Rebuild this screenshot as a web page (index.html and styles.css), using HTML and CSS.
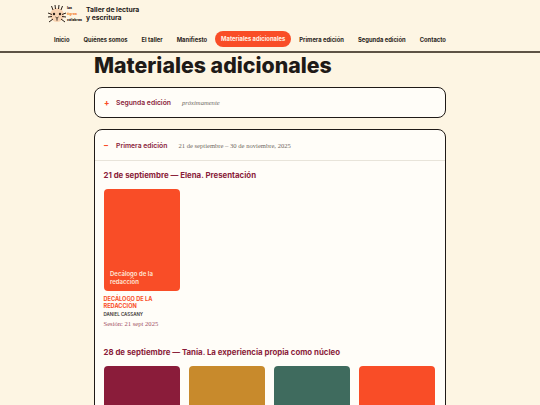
FILE: index.html
```html
<!DOCTYPE html>
<html lang="es">
<head>
<meta charset="utf-8">
<title>Materiales adicionales</title>
<link rel="stylesheet" href="styles.css">
</head>
<body>
<header class="site-header">
  <div class="brand">
    <svg class="cat" viewBox="0 0 19 20" width="19" height="20" aria-hidden="true">
      <circle cx="9" cy="11" r="7" fill="#f8d3b2"/>
      <path d="M3.5 2l1.5 4M7 1l.5 4M11 1l-.5 4M14.500 2l-1.500 4M0 9l4 1.500M0 13l4-.5M1 18l4-3M18 9l-4 1.500M18 13l-4-.5M17 18l-4-3" stroke="#2a1f18" stroke-width="1" fill="none"/>
      <circle cx="6" cy="10" r="1.2" fill="#2a1f18"/>
      <circle cx="12" cy="10" r="1.2" fill="#2a1f18"/>
      <path d="M7.500 13l1.500 1.200 1.500-1.200M9 14.200v2.500" stroke="#2a1f18" stroke-width=".9" fill="none"/>
    </svg>
    <div class="brand-mini">
      <span>las</span>
      <span class="brand-orange">tigres</span>
      <span>célebres</span>
    </div>
    <div class="brand-title">Taller de lectura<br>y escritura</div>
  </div>
  <nav class="nav">
    <a>Inicio</a>
    <a>Quiénes somos</a>
    <a>El taller</a>
    <a>Manifiesto</a>
    <a class="active">Materiales adicionales</a>
    <a>Primera edición</a>
    <a>Segunda edición</a>
    <a>Contacto</a>
  </nav>
</header>
<main class="main">
  <h1 class="page-title">Materiales adicionales</h1>
  <section class="acc">
    <div class="acc-head">
      <span class="acc-sign">+</span>
      <span class="acc-name">Segunda edición</span>
      <span class="acc-note">próximamente</span>
    </div>
  </section>
  <section class="acc">
    <div class="acc-head acc-head-open">
      <span class="acc-sign">–</span>
      <span class="acc-name">Primera edición</span>
      <span class="acc-date">21 de septiembre – 30 de noviembre, 2025</span>
    </div>
    <div class="acc-body">
      <h2 class="session">21 de septiembre — Elena. Presentación</h2>
      <div class="cards">
        <article class="card">
          <div class="cover orange"><span>Decálogo de la redacción</span></div>
          <div class="card-title">DECÁLOGO DE LA REDACCIÓN</div>
          <div class="card-author">DANIEL CASSANY</div>
          <div class="card-date">Sesión: 21 sept 2025</div>
        </article>
      </div>
      <h2 class="session session-next">28 de septiembre — Tania. La experiencia propia como núcleo</h2>
      <div class="cards">
        <article class="card"><div class="cover wine"></div></article>
        <article class="card"><div class="cover ochre"></div></article>
        <article class="card"><div class="cover green"></div></article>
        <article class="card"><div class="cover orange"></div></article>
      </div>
    </div>
  </section>
</main>
</body>
</html>
```
FILE: styles.css
```css
* { box-sizing: border-box; }
html, body { height: 405px; overflow: hidden; }
body {
  margin: 0;
  background: #fdf5e3;
  color: #1f1a17;
  font-family: Inter, "Liberation Sans", sans-serif;
}
.site-header {
  height: 53px;
  border-bottom: 2px solid #5d5345;
  padding: 4px 48px 0;
}
.brand { display: flex; align-items: center; height: 20px; }
.cat { flex: none; }
.brand-mini {
  width: 16px;
  font-size: 3.5px;
  line-height: 6.2px;
  font-weight: 800;
  display: flex;
  flex-direction: column;
}
.brand-orange { color: #f58a3c; }
.brand-title {
  margin-left: 3px;
  font-size: 6.8px;
  line-height: 8px;
  font-weight: 700;
}
.nav {
  display: flex;
  align-items: center;
  gap: 2px;
  margin-top: 7px;
  height: 16px;
  font-size: 5.85px;
  font-weight: 700;
  color: #2a2420;
}
.nav a { padding: 0 6px; white-space: nowrap; }
.nav a.active {
  background: #f94d27;
  color: #fff3e6;
  height: 16px;
  line-height: 16px;
  border-radius: 8px;
}
.main { width: 352px; margin: 0 auto; }
.page-title {
  margin: 0;
  height: 34px;
  font-size: 21.3px;
  line-height: 24px;
  font-weight: 800;
  color: #1f1a17;
}
.acc {
  background: #fffdf8;
  border: 1.5px solid #1f1a17;
  border-radius: 8px;
  margin-bottom: 11px;
  overflow: hidden;
}
.acc-head {
  display: flex;
  align-items: center;
  height: 29px;
  padding-left: 9px;
}
.acc-head-open { height: 31px; border-bottom: 1px solid #e8e4da; }
.acc-sign { width: 12px; color: #f94d27; font-size: 8px; font-weight: 800; }
.acc-name { color: #8a1c3a; font-size: 6.8px; font-weight: 600; }
.acc-note, .acc-date {
  font-family: "Liberation Serif", serif;
  color: #6f6a64;
  font-size: 6.6px;
}
.acc-note { margin-left: 11px; font-style: italic; }
.acc-date { margin-left: 11px; }
.acc-body { padding: 9px 8.5px 20px; }
.session {
  margin: 0 0 8px;
  font-size: 7.85px;
  line-height: 11px;
  font-weight: 700;
  color: #8a1c3a;
}
.session-next { margin-top: 19px; }
.cards {
  display: grid;
  grid-template-columns: repeat(4, 76px);
  column-gap: 9.33px;
}
.cover {
  height: 102px;
  border-radius: 4px;
  display: flex;
  align-items: flex-end;
  padding: 0 6.5px 6px;
  color: #ffe9d9;
  font-size: 6px;
  line-height: 7.4px;
  font-weight: 600;
}
.orange { background: #f94d27; }
.wine { background: #8a1c3a; }
.ochre { background: #c88a2c; }
.green { background: #3f6b5e; }
.card-title {
  margin-top: 5px;
  color: #f94d27;
  font-size: 5.6px;
  line-height: 7.3px;
  font-weight: 700;
}
.card-author {
  margin-top: 0;
  color: #3a3430;
  font-size: 4.5px;
  line-height: 7px;
  font-weight: 600;
}
.card-date {
  margin-top: 2px;
  font-family: "Liberation Serif", serif;
  color: #8a1c3a;
  font-size: 6.6px;
  line-height: 8px;
  opacity: 0.8;
}
```
